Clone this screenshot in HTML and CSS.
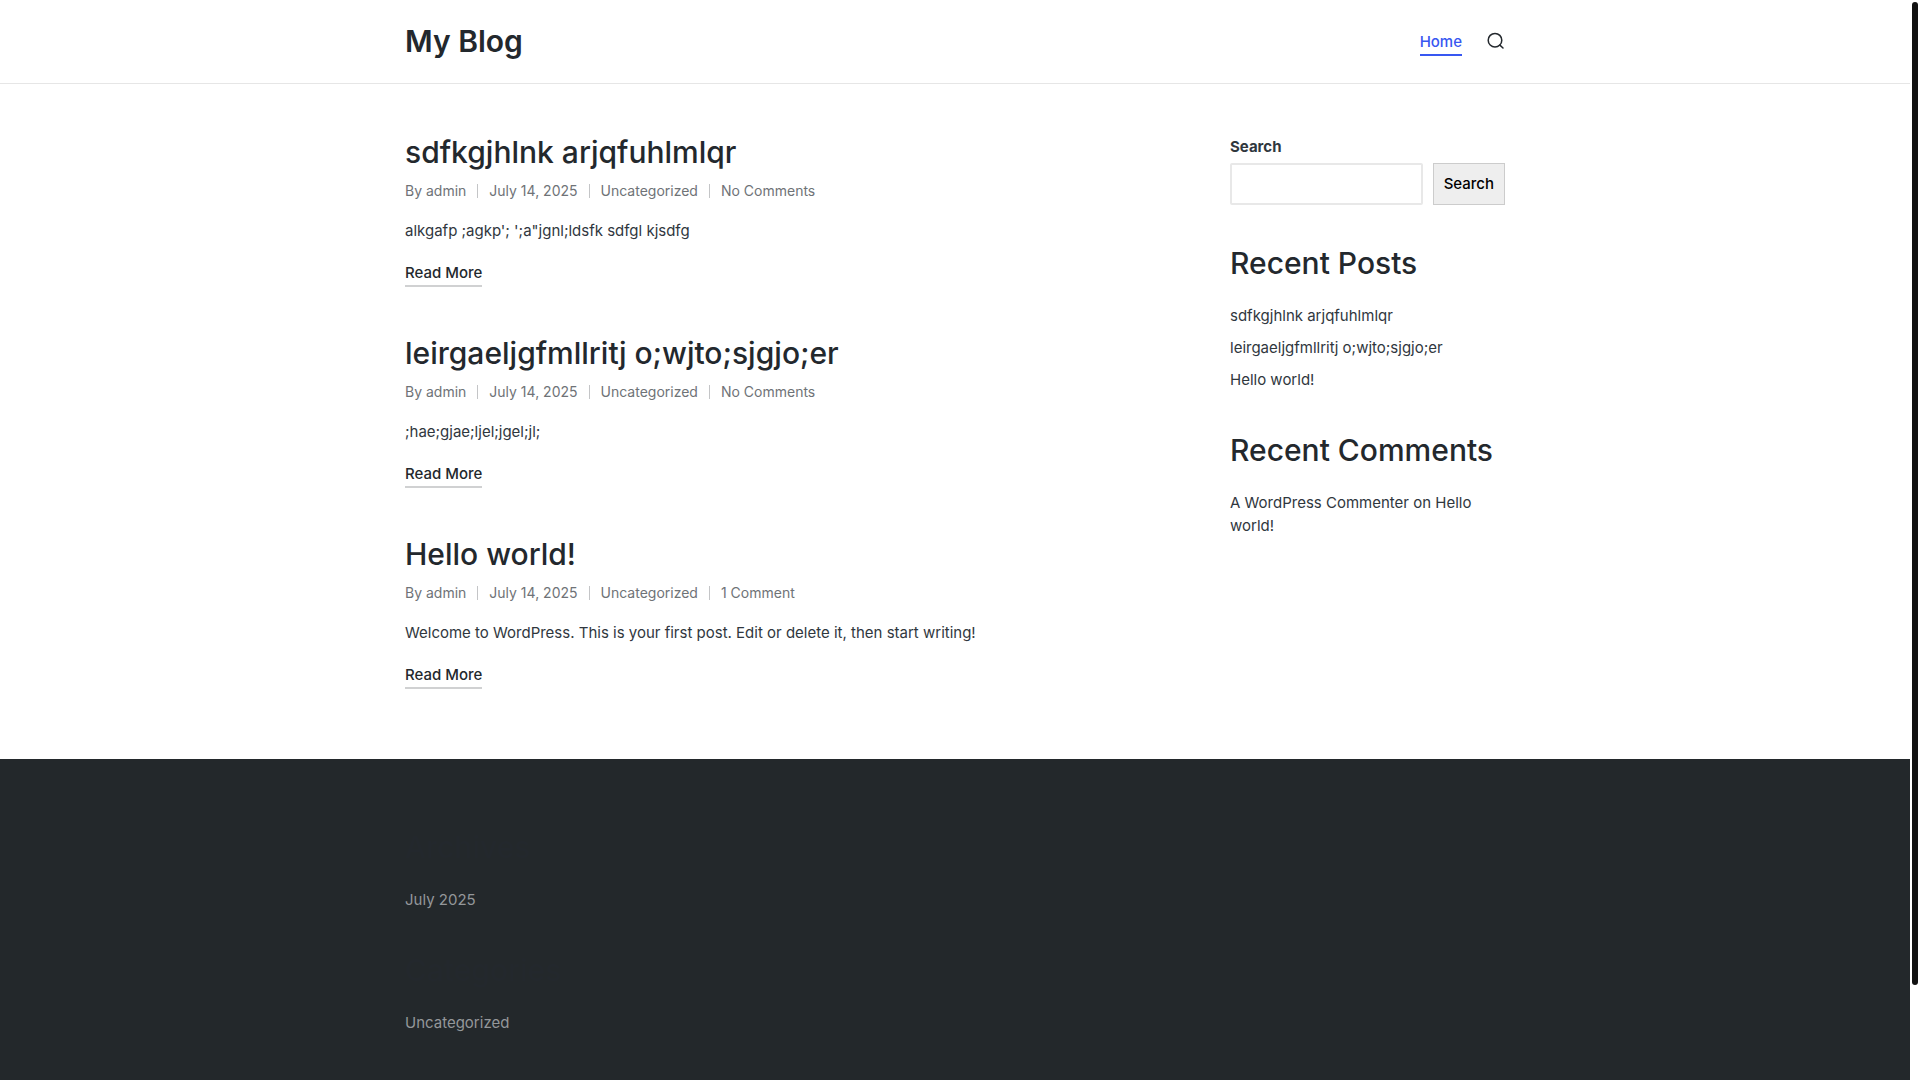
FILE: index.html
```html
<!DOCTYPE html>
<html lang="en-US">
<head>
  <meta charset="UTF-8">
  <meta name="viewport" content="width=device-width, initial-scale=1">
  <title>My Blog</title>
  <link rel="stylesheet" href="styles.css">
</head>
<body>
  <header class="site-header">
    <div class="container header-inner">
      <a class="site-title" href="#">My Blog</a>
      <nav class="main-nav">
        <a class="nav-link" href="#">Home</a>
        <button class="search-toggle" type="button" aria-label="Search">
          <svg width="18" height="18" viewBox="0 0 18 18" fill="none" stroke="currentColor" stroke-width="1.5" stroke-linecap="round">
            <circle cx="8" cy="8.2" r="6.8"/>
            <path d="M12.9 13.1 L16 16"/>
          </svg>
        </button>
      </nav>
    </div>
  </header>

  <div class="container content">
    <main class="posts">
      <article class="post">
        <h2 class="post-title"><a href="#">sdfkgjhlnk arjqfuhlmlqr</a></h2>
        <div class="post-meta">
          <span>By <a href="#">admin</a></span>
          <span>July 14, 2025</span>
          <span><a href="#">Uncategorized</a></span>
          <span><a href="#">No Comments</a></span>
        </div>
        <p class="post-excerpt">alkgafp ;agkp'; ';a"jgnl;ldsfk sdfgl kjsdfg</p>
        <a class="read-more" href="#">Read More</a>
      </article>

      <article class="post">
        <h2 class="post-title"><a href="#">leirgaeljgfmllritj o;wjto;sjgjo;er</a></h2>
        <div class="post-meta">
          <span>By <a href="#">admin</a></span>
          <span>July 14, 2025</span>
          <span><a href="#">Uncategorized</a></span>
          <span><a href="#">No Comments</a></span>
        </div>
        <p class="post-excerpt">;hae;gjae;ljel;jgel;jl;</p>
        <a class="read-more" href="#">Read More</a>
      </article>

      <article class="post">
        <h2 class="post-title"><a href="#">Hello world!</a></h2>
        <div class="post-meta">
          <span>By <a href="#">admin</a></span>
          <span>July 14, 2025</span>
          <span><a href="#">Uncategorized</a></span>
          <span><a href="#">1 Comment</a></span>
        </div>
        <p class="post-excerpt">Welcome to WordPress. This is your first post. Edit or delete it, then start writing!</p>
        <a class="read-more" href="#">Read More</a>
      </article>
    </main>

    <aside class="sidebar">
      <form class="search-form">
        <label for="search">Search</label>
        <div class="search-row">
          <input type="search" id="search" name="s">
          <button type="submit">Search</button>
        </div>
      </form>

      <section class="widget">
        <h2>Recent Posts</h2>
        <ul>
          <li><a href="#">sdfkgjhlnk arjqfuhlmlqr</a></li>
          <li><a href="#">leirgaeljgfmllritj o;wjto;sjgjo;er</a></li>
          <li><a href="#">Hello world!</a></li>
        </ul>
      </section>

      <section class="widget">
        <h2>Recent Comments</h2>
        <ul>
          <li><a href="#">A WordPress Commenter</a> on <a href="#">Hello world!</a></li>
        </ul>
      </section>
    </aside>
  </div>

  <footer class="site-footer">
    <div class="container footer-inner">
      <section class="widget">
        <h2>Archives</h2>
        <ul>
          <li><a href="#">July 2025</a></li>
        </ul>
      </section>
      <section class="widget">
        <h2>Categories</h2>
        <ul>
          <li><a href="#">Uncategorized</a></li>
        </ul>
      </section>
    </div>
  </footer>

  <div class="scrollbar"><div class="scrollbar-thumb"></div></div>
</body>
</html>
```

FILE: styles.css
```css
* {
  box-sizing: border-box;
}
body {
  margin: 0;
  padding-right: 10px;
  min-height: 100vh;
  display: flex;
  flex-direction: column;
  background: #fff;
  color: #30373e;
  font-family: Inter, "Liberation Sans", sans-serif;
  font-size: 15px;
  line-height: 23px;
}
a {
  color: inherit;
  text-decoration: none;
}
h2,
p,
ul {
  margin: 0;
  padding: 0;
}
h2 {
  color: #23282d;
  font-size: 30px;
  font-weight: 500;
  line-height: 38px;
}
ul {
  list-style: none;
}
.container {
  width: 100%;
  max-width: 1200px;
  margin: 0 auto;
  padding: 0 50px;
}

/* Header */
.site-header {
  border-bottom: 1px solid #e6e6e6;
}
.header-inner {
  display: flex;
  justify-content: space-between;
  align-items: center;
  height: 83px;
  padding-bottom: 2px;
}
.site-title {
  color: #23282d;
  font-size: 30px;
  font-weight: 600;
  line-height: 38px;
}
.main-nav {
  display: flex;
  align-items: center;
  gap: 25px;
}
.nav-link {
  padding-top: 4px;
  border-bottom: 2px solid #3857f1;
  color: #3857f1;
  font-weight: 500;
  line-height: 25px;
}
.search-toggle {
  display: flex;
  padding: 0;
  border: none;
  background: none;
  color: #23282d;
  cursor: pointer;
}

/* Posts */
.content {
  display: flex;
  justify-content: space-between;
  padding-top: 49px;
  padding-bottom: 70px;
}
.posts {
  display: flex;
  flex: 1;
  flex-direction: column;
  gap: 47px;
}
.post {
  display: flex;
  flex-direction: column;
  align-items: flex-start;
}
.post-meta {
  display: flex;
  margin-top: 8px;
  color: #6f7377;
  font-size: 14px;
}
.post-meta span {
  display: flex;
  align-items: center;
  white-space: pre;
}
.post-meta span + span::before {
  content: "";
  height: 14px;
  margin: 0 11px;
  border-left: 1px solid #c4c5c7;
}
.post-excerpt {
  margin-top: 17px;
}
.read-more {
  margin-top: 19px;
  padding-bottom: 1px;
  border-bottom: 2px solid #d0d1d2;
  color: #23282d;
  font-weight: 500;
}

/* Sidebar */
.sidebar {
  width: 25%;
  padding-top: 2px;
}
.search-form {
  margin-bottom: 39px;
}
.search-form label {
  display: block;
  font-weight: 700;
}
.search-row {
  display: flex;
  gap: 10px;
  margin-top: 5px;
}
.search-row input {
  flex: 1;
  min-width: 0;
  height: 42px;
  padding: 0 10px;
  border: 2px solid #e8e8e8;
  border-radius: 2px;
  background: #fff;
  font: inherit;
}
.search-row button {
  padding: 0 10px 1px;
  border: 1px solid #ccc;
  background: #eee;
  color: #000;
  font: inherit;
  font-weight: 500;
  cursor: pointer;
}
.widget ul {
  display: flex;
  flex-direction: column;
  gap: 9px;
  margin-top: 22px;
}
.widget + .widget {
  margin-top: 40px;
}

/* Footer */
.site-footer {
  flex: 1;
  background: #23282b;
  color: #94979a;
}
.footer-inner {
  padding-top: 69px;
  padding-bottom: 40px;
}

/* Page scrollbar */
.scrollbar {
  position: fixed;
  top: 0;
  right: 0;
  width: 10px;
  height: 100vh;
  padding: 2px;
  background: #fff;
}
.scrollbar-thumb {
  height: 91.4%;
  border-radius: 3px;
  background: #111;
}
```
